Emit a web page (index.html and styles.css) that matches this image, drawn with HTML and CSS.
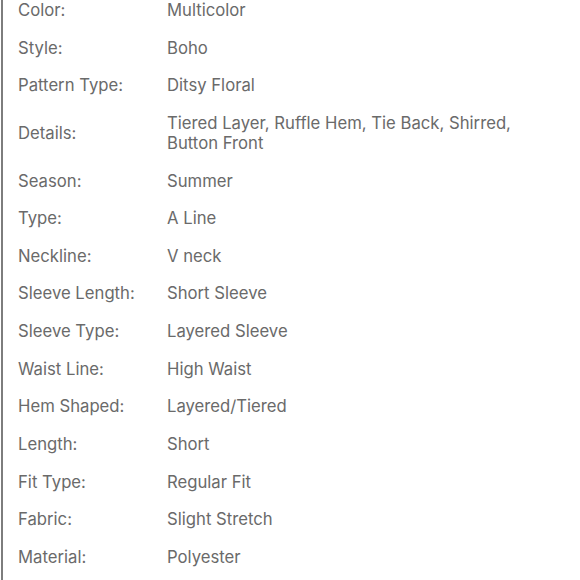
FILE: index.html
```html
<!DOCTYPE html>
<html>
<head>
<meta charset="utf-8">
<link rel="stylesheet" href="styles.css">
</head>
<body>
<div class="panel">
  <dl class="specs">
    <dt>Color:</dt><dd>Multicolor</dd>
    <dt>Style:</dt><dd>Boho</dd>
    <dt>Pattern Type:</dt><dd>Ditsy Floral</dd>
    <dt class="mid">Details:</dt><dd>Tiered Layer, Ruffle Hem, Tie Back, Shirred, Button Front</dd>
    <dt>Season:</dt><dd>Summer</dd>
    <dt>Type:</dt><dd>A Line</dd>
    <dt>Neckline:</dt><dd>V neck</dd>
    <dt>Sleeve Length:</dt><dd>Short Sleeve</dd>
    <dt>Sleeve Type:</dt><dd>Layered Sleeve</dd>
    <dt>Waist Line:</dt><dd>High Waist</dd>
    <dt>Hem Shaped:</dt><dd>Layered/Tiered</dd>
    <dt>Length:</dt><dd>Short</dd>
    <dt>Fit Type:</dt><dd>Regular Fit</dd>
    <dt>Fabric:</dt><dd>Slight Stretch</dd>
    <dt>Material:</dt><dd>Polyester</dd>
  </dl>
</div>
</body>
</html>
```

FILE: styles.css
```css
html, body {
  margin: 0;
  padding: 0;
  background: #ffffff;
}
body {
  width: 580px;
  height: 580px;
  overflow: hidden;
}
.panel {
  margin-left: 1px;
  border-left: 2px solid #7d7d7d;
  min-height: 580px;
  padding-left: 15px;
  font-family: Inter, "Noto Sans", sans-serif;
  font-size: 16.7px;
  line-height: 20px;
  color: #6a6a6a;
}
.specs {
  margin: 0;
  display: grid;
  grid-template-columns: 149px 370px;
  row-gap: 17.65px;
}
.specs dt, .specs dd {
  margin: 0;
}
.specs dt.mid {
  align-self: center;
}
```
